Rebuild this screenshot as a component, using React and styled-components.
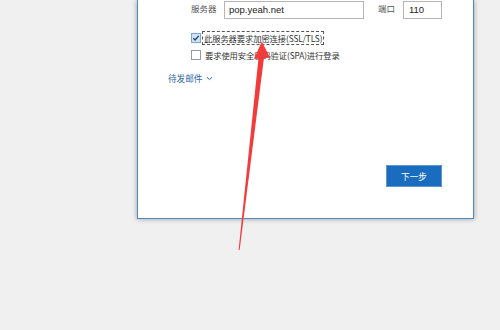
import React from "react";
import styled, { createGlobalStyle } from "styled-components";

const Global = createGlobalStyle`
  html, body { margin: 0; padding: 0; }
  body {
    background: #f0f0f0;
    width: 500px;
    height: 330px;
    overflow: hidden;
    font-family: "Noto Sans CJK SC", "Noto Sans", sans-serif;
    position: relative;
  }
`;

const Page = styled.div`
  width: 500px;
  height: 330px;
  position: relative;
`;

const Dialog = styled.div`
  margin-left: 137px;
  width: 337px;
  height: 219px;
  box-sizing: border-box;
  background: #ffffff;
  border: 1px solid #4f88c4;
  border-top: none;
  box-shadow: 0 0 5px rgba(0, 0, 0, 0.35);
  padding: 1px 31px 0 0;
  display: flex;
  flex-direction: column;
`;

const ServerRow = styled.div`
  display: flex;
  align-items: center;
  margin-left: 53px;
  height: 18px;
`;

const Label = styled.span`
  width: ${(p) => p.$w}px;
  font-size: 8.5px;
  color: #555;
  align-self: flex-start;
  line-height: 14px;
  flex: none;
`;

const TextInput = styled.div`
  box-sizing: border-box;
  width: ${(p) => p.$w}px;
  height: 18px;
  border: 1px solid #b5b5b5;
  background: #fff;
  font-family: "Liberation Sans", Arial, sans-serif;
  font-size: 9.5px;
  color: #222;
  line-height: 16px;
  padding-left: ${(p) => p.$pad}px;
  margin-right: ${(p) => p.$mr || 0}px;
  flex: none;
`;

const CheckRow = styled.div`
  display: flex;
  align-items: center;
  margin-left: 53px;
  height: 14px;
  margin-top: ${(p) => p.$mt}px;
`;

const Box = styled.span`
  box-sizing: border-box;
  width: 10px;
  height: 10px;
  border: 1px solid ${(p) => (p.$checked ? "#7aa7d6" : "#9a9a9a")};
  background: ${(p) => (p.$checked ? "#cfe3f6" : "#fff")};
  display: flex;
  align-items: center;
  justify-content: center;
  flex: none;
`;

const CheckText = styled.span`
  margin-left: ${(p) => (p.$focus ? 1 : 2)}px;
  font-size: 8.3px;
  color: #333;
  line-height: 12px;
  padding: 0 1px;
  border: 1px ${(p) => (p.$focus ? "dashed #555" : "solid transparent")};
  white-space: nowrap;
  letter-spacing: -0.1px;
`;

const MoreLink = styled.div`
  margin: 10px 0 0 30px;
  display: flex;
  align-items: center;
  gap: 4px;
  font-size: 8.6px;
  color: #2b64a8;
  line-height: 12px;
`;

const Footer = styled.div`
  display: flex;
  justify-content: flex-end;
  margin-top: 81px;
`;

const NextButton = styled.div`
  width: 56px;
  height: 22px;
  background: #1a6dbe;
  border: 1px solid #5d95d0;
  box-sizing: border-box;
  color: #fff;
  font-size: 8.6px;
  display: flex;
  align-items: center;
  justify-content: center;
`;

const Annotation = styled.svg`
  position: absolute;
  left: 0;
  top: 0;
  pointer-events: none;
`;

export default function App() {
  return (
    <Page>
      <Global />
      <Dialog>
        <ServerRow>
          <Label $w={33}>服务器</Label>
          <TextInput $w={140} $pad={4} $mr={14}>pop.yeah.net</TextInput>
          <Label $w={25}>端口</Label>
          <TextInput $w={39} $pad={5}>110</TextInput>
        </ServerRow>
        <CheckRow $mt={12}>
          <Box $checked>
            <svg width="8" height="8" viewBox="0 0 8 8">
              <path d="M1.3 4.2 L3.1 6 L6.8 1.8" fill="none" stroke="#1d3b63" strokeWidth="1.2" />
            </svg>
          </Box>
          <CheckText $focus>此服务器要求加密连接(SSL/TLS)</CheckText>
        </CheckRow>
        <CheckRow $mt={3}>
          <Box />
          <CheckText>要求使用安全密码验证(SPA)进行登录</CheckText>
        </CheckRow>
        <MoreLink>
          待发邮件
          <svg width="7" height="5" viewBox="0 0 7 5">
            <path d="M1 1.2 L3.5 3.6 L6 1.2" fill="none" stroke="#2b64a8" strokeWidth="1" />
          </svg>
        </MoreLink>
        <Footer>
          <NextButton>下一步</NextButton>
        </Footer>
      </Dialog>
      <Annotation width="500" height="330" viewBox="0 0 500 330">
        <polygon points="258.6,57 264,57.5 239.6,250 238.6,250" fill="#f23b3b" />
        <polygon points="261.8,41.5 254,59 270,57.5" fill="#f23b3b" />
      </Annotation>
    </Page>
  );
}
